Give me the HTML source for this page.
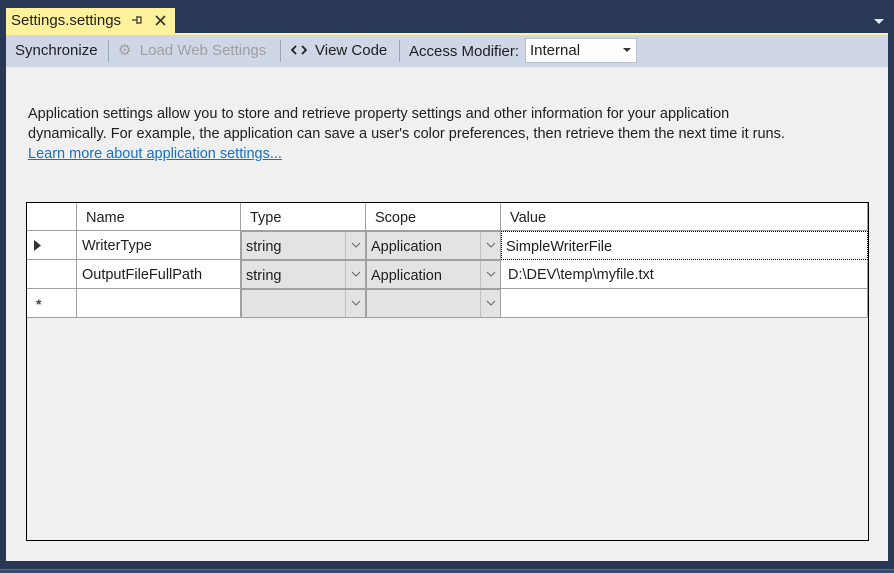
<!DOCTYPE html>
<html><head><style>
*{margin:0;padding:0;box-sizing:border-box}
body{width:894px;height:573px;background:#293955;position:relative;overflow:hidden;font-family:"Liberation Sans",sans-serif;font-size:14px;color:#1e1e1e}
.a{position:absolute}
.t{white-space:nowrap}
.cell{position:absolute;border-right:1px solid #a0a0a0;border-bottom:1px solid #a0a0a0;background:#fff;font-size:14.5px;padding-left:5px;line-height:30px;white-space:nowrap}
.dd{background:#e3e3e3;border:1px solid #a0a0a0}
.arr{position:absolute;top:0;width:20px;height:100%;border-left:1px solid #c0c0c0;background:#e3e3e3}
.arr svg{position:absolute;left:5px;top:10px}
</style></head><body>
<div class="a" style="left:6px;top:8px;width:169px;height:27px;background:#fff29d"></div>
<div class="a t" style="left:11px;top:12px;font-size:15px;color:#1e1e1e">Settings.settings</div>
<svg class="a" style="left:131px;top:15px" width="12" height="10"><path d="M1 5H6M6 1V9M6 2H10V8H6" stroke="#333" fill="none" stroke-width="1.2"/></svg>
<svg class="a" style="left:155px;top:15px" width="11" height="11"><path d="M1 1L10 10M10 1L1 10" stroke="#333" stroke-width="1.6"/></svg>
<div class="a" style="left:6px;top:33px;width:882px;height:2px;background:#fff29d"></div>
<div class="a" style="left:874px;top:19px;width:0;height:0;border-left:5px solid transparent;border-right:5px solid transparent;border-top:5px solid #e8e8f0"></div>
<div class="a" style="left:6px;top:35px;width:882px;height:32px;background:#cfd6e5"></div>
<div class="a t" style="left:15px;top:42px;font-size:15px">Synchronize</div>
<div class="a" style="left:108px;top:40px;width:1px;height:22px;background:#9aa5b8"></div>
<div class="a t" style="left:118px;top:41px;font-size:15px;color:#a0a0a0">⚙ &nbsp;Load Web Settings</div>
<div class="a" style="left:280px;top:40px;width:1px;height:22px;background:#9aa5b8"></div>
<svg class="a" style="left:291px;top:44px" width="16" height="12"><path d="M5 2L1 6L5 10M11 2L15 6L11 10" stroke="#1e1e1e" stroke-width="1.8" fill="none"/></svg>
<div class="a t" style="left:315px;top:42px;font-size:15px">View Code</div>
<div class="a" style="left:399px;top:40px;width:1px;height:22px;background:#9aa5b8"></div>
<div class="a t" style="left:409px;top:43px;font-size:15px">Access Modifier:</div>
<div class="a" style="left:525px;top:38px;width:112px;height:25px;background:#fff;border:1px solid #b8c0d0"></div>
<div class="a t" style="left:530px;top:42px;font-size:15px">Internal</div>
<div class="a" style="left:623px;top:48px;width:0;height:0;border-left:4px solid transparent;border-right:4px solid transparent;border-top:4px solid #333"></div>
<div class="a" style="left:6px;top:67px;width:882px;height:494px;background:#f0f0f0"></div>
<div class="a" style="left:28px;top:104px;width:780px;font-size:14.5px;line-height:20px;color:#1e1e1e">Application settings allow you to store and retrieve property settings and other information for your application dynamically. For example, the application can save a user's color preferences, then retrieve them the next time it runs.<br><span style="color:#1a6fc0;text-decoration:underline">Learn more about application settings...</span></div>
<div class="a" style="left:0;top:561px;width:894px;height:12px;background:#334a6a;border-top:8px solid #293955"></div>
<div class="a" style="left:0;top:569px;width:894px;height:1px;background:#5a6e90"></div>
<div class="a" style="left:26px;top:202px;width:843px;height:339px;border:1px solid #000;background:#f0f0f0"></div>
<div class="cell" style="left:27px;top:203px;width:50px;height:28px"></div>
<div class="cell" style="left:77px;top:203px;width:164px;height:28px;padding-left:9px">Name</div>
<div class="cell" style="left:241px;top:203px;width:125px;height:28px;padding-left:9px">Type</div>
<div class="cell" style="left:366px;top:203px;width:135px;height:28px;padding-left:9px">Scope</div>
<div class="cell" style="left:501px;top:203px;width:367px;height:28px;padding-left:9px">Value</div>

<div class="cell" style="left:27px;top:231px;width:50px;height:29px"><svg style="position:absolute;left:7px;top:9px" width="8" height="11"><path d="M0 0L7 5.5L0 11Z" fill="#333"/></svg></div>
<div class="cell" style="left:77px;top:231px;width:164px;height:29px">WriterType</div>
<div class="cell dd" style="left:241px;top:231px;width:125px;height:29px;padding-left:4px">string<span class="arr" style="right:0"><svg width="10" height="6"><path d="M1 1L5 5L9 1" stroke="#666" fill="none"/></svg></span></div>
<div class="cell dd" style="left:366px;top:231px;width:135px;height:29px;padding-left:4px">Application<span class="arr" style="right:0"><svg width="10" height="6"><path d="M1 1L5 5L9 1" stroke="#666" fill="none"/></svg></span></div>
<div class="cell" style="left:501px;top:231px;width:367px;height:29px;padding-left:4px;border:1px dotted #000">SimpleWriterFile</div>

<div class="cell" style="left:27px;top:260px;width:50px;height:29px"></div>
<div class="cell" style="left:77px;top:260px;width:164px;height:29px">OutputFileFullPath</div>
<div class="cell dd" style="left:241px;top:260px;width:125px;height:29px;padding-left:4px">string<span class="arr" style="right:0"><svg width="10" height="6"><path d="M1 1L5 5L9 1" stroke="#666" fill="none"/></svg></span></div>
<div class="cell dd" style="left:366px;top:260px;width:135px;height:29px;padding-left:4px">Application<span class="arr" style="right:0"><svg width="10" height="6"><path d="M1 1L5 5L9 1" stroke="#666" fill="none"/></svg></span></div>
<div class="cell" style="left:501px;top:260px;width:367px;height:29px;padding-left:7px">D:\DEV\temp\myfile.txt</div>

<div class="cell" style="left:27px;top:289px;width:50px;height:29px"><span style="font-size:14px;font-weight:bold;padding-left:4px;color:#444">*</span></div>
<div class="cell" style="left:77px;top:289px;width:164px;height:29px"></div>
<div class="cell dd" style="left:241px;top:289px;width:125px;height:29px"><span class="arr" style="right:0"><svg width="10" height="6"><path d="M1 1L5 5L9 1" stroke="#666" fill="none"/></svg></span></div>
<div class="cell dd" style="left:366px;top:289px;width:135px;height:29px"><span class="arr" style="right:0"><svg width="10" height="6"><path d="M1 1L5 5L9 1" stroke="#666" fill="none"/></svg></span></div>
<div class="cell" style="left:501px;top:289px;width:367px;height:29px"></div>
</body></html>
